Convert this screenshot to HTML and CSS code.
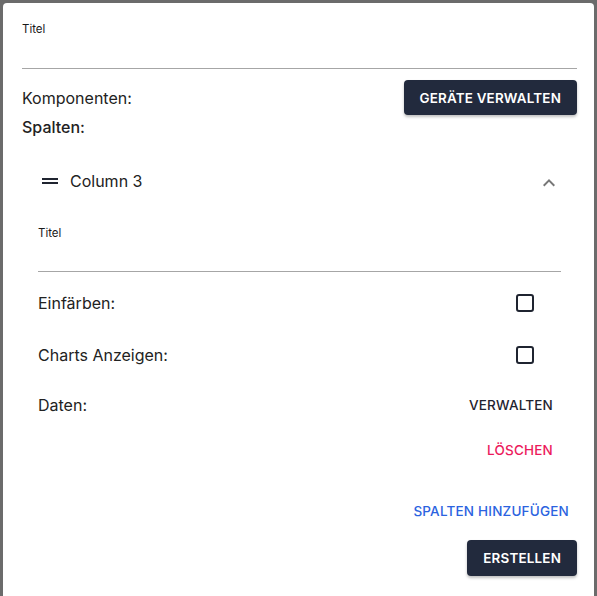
FILE: index.html
```html
<!DOCTYPE html>
<html lang="de">
<head>
<meta charset="utf-8">
<title>Dialog</title>
<link rel="stylesheet" href="styles.css">
</head>
<body>
<div class="dialog">
  <div class="field field-top">
    <label class="field-label">Titel</label>
    <div class="field-input"></div>
  </div>

  <div class="row-between komponenten">
    <span class="text">Komponenten:</span>
    <button class="btn-contained">Geräte verwalten</button>
  </div>

  <div class="heading">Spalten:</div>

  <div class="accordion">
    <div class="acc-summary">
      <svg class="drag-icon" viewBox="0 0 24 24" width="24" height="24"><path d="M20 9H4v2h16V9zM4 15h16v-2H4v2z" fill="#1f2430"/></svg>
      <span class="acc-title">Column 3</span>
      <svg class="chev-icon" viewBox="0 0 24 24" width="24" height="24"><path d="M12 8l-6 6 1.41 1.41L12 10.83l4.59 4.58L18 14z" fill="#777"/></svg>
    </div>
    <div class="acc-details">
      <div class="field field-inner">
        <label class="field-label">Titel</label>
        <div class="field-input inner-input"></div>
      </div>
      <div class="opt-row r1">
        <span class="text">Einfärben:</span>
        <span class="checkbox"></span>
      </div>
      <div class="opt-row r2">
        <span class="text">Charts Anzeigen:</span>
        <span class="checkbox"></span>
      </div>
      <div class="opt-row r3">
        <span class="text">Daten:</span>
        <button class="btn-text btn-dark">Verwalten</button>
      </div>
      <div class="right-row">
        <button class="btn-text btn-pink">Löschen</button>
      </div>
    </div>
  </div>

  <div class="right-row add-row">
    <button class="btn-text btn-blue">Spalten hinzufügen</button>
  </div>
  <div class="right-row create-row">
    <button class="btn-contained btn-create">Erstellen</button>
  </div>
</div>
</body>
</html>
```

FILE: styles.css
```css
html, body {
  margin: 0;
  padding: 0;
  height: 100%;
  overflow: hidden;
}
body {
  background: #6b6b6b;
  font-family: Inter, "Noto Sans", "Liberation Sans", sans-serif;
  color: #1f2430;
}
.dialog {
  margin: 3px 3px 0 3px;
  height: calc(100vh - 3px);
  background: #ffffff;
  border-radius: 4px 4px 0 0;
  padding: 0 17px 0 19px;
  box-sizing: border-box;
}
.field {
  display: flex;
  flex-direction: column;
}
.field-top {
  padding-top: 19px;
}
.field-label {
  font-size: 11.5px;
  line-height: 14px;
  color: #1a1a1a;
}
.field-input {
  height: 32px;
  border-bottom: 1px solid #a6a6a6;
}
.inner-input {
  height: 31px;
}
.text {
  font-size: 16px;
  line-height: 20px;
  color: #222222;
}
.row-between {
  display: flex;
  justify-content: space-between;
  align-items: center;
}
.komponenten {
  margin-top: 11px;
}
.btn-contained {
  height: 35px;
  padding: 0 16px;
  border: none;
  border-radius: 4px;
  background: #222a3d;
  color: #ffffff;
  font-family: Inter, "Noto Sans", "Liberation Sans", sans-serif;
  font-size: 13.4px;
  font-weight: 600;
  text-transform: uppercase;
  letter-spacing: 0.2px;
  box-shadow: 0 2px 3px rgba(0,0,0,0.25);
}
.heading {
  margin-top: 2px;
  font-size: 16px;
  line-height: 20px;
  font-weight: 500;
  color: #222222;
}
.accordion {
  margin-top: 12px;
}
.acc-summary {
  height: 64px;
  padding: 0 16px;
  display: flex;
  align-items: center;
}
.drag-icon {
  display: block;
}
.acc-title {
  margin-left: 8px;
  font-size: 16px;
  color: #222222;
  flex: 1;
}
.chev-icon {
  display: block;
  margin-top: 3px;
}
.acc-details {
  padding: 0 16px 8px 16px;
}
.field-inner {
  padding-top: 13px;
}
.opt-row {
  height: 42px;
  display: flex;
  justify-content: space-between;
  align-items: center;
}
.r1 { margin-top: 10px; }
.r2 { margin-top: 10px; }
.r3 { margin-top: 8px; }
.checkbox {
  width: 14px;
  height: 14px;
  border: 2px solid #1f2430;
  border-radius: 3px;
  margin-right: 27px;
}
.btn-text {
  height: 36px;
  padding: 0 8px;
  border: none;
  background: transparent;
  font-family: Inter, "Noto Sans", "Liberation Sans", sans-serif;
  font-size: 13.5px;
  font-weight: 500;
  text-transform: uppercase;
  letter-spacing: 0.2px;
}
.btn-dark { color: #1f2430; }
.btn-pink { color: #ec1a5c; }
.btn-blue { color: #2b63e0; }
.right-row {
  display: flex;
  justify-content: flex-end;
  margin-top: 6px;
}
.add-row {
  margin-top: 17px;
}
.create-row {
  margin-top: 11px;
}
.btn-create {
  height: 36px;
}
```
